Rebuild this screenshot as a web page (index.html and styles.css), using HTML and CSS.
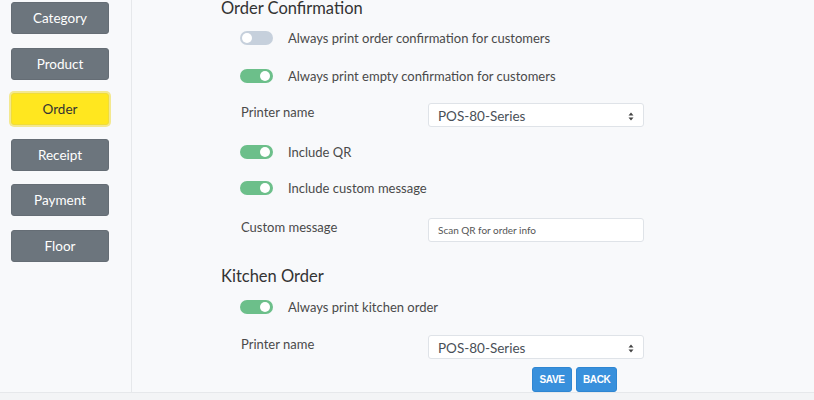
FILE: index.html
```html
<!DOCTYPE html>
<html>
<head>
<meta charset="utf-8">
<link rel="stylesheet" href="styles.css">
</head>
<body>
<div class="app">
  <aside class="sidebar">
    <button class="nav-btn">Category</button>
    <button class="nav-btn">Product</button>
    <button class="nav-btn active">Order</button>
    <button class="nav-btn">Receipt</button>
    <button class="nav-btn">Payment</button>
    <button class="nav-btn">Floor</button>
  </aside>
  <main class="main">
    <h2 class="section-title first">Order Confirmation</h2>
    <div class="toggle-row r1"><span class="toggle off"><span class="knob"></span></span><span class="toggle-label">Always print order confirmation for customers</span></div>
    <div class="toggle-row r2"><span class="toggle on"><span class="knob"></span></span><span class="toggle-label">Always print empty confirmation for customers</span></div>
    <div class="field-row r3"><span class="field-label">Printer name</span>
      <div class="select"><span>POS-80-Series</span><svg width="6" height="9" viewBox="0 0 6 9"><path d="M3 0.5 L5.5 3.5 H0.5 Z M3 8.5 L5.5 5.5 H0.5 Z" fill="#444"/></svg></div>
    </div>
    <div class="toggle-row r4"><span class="toggle on"><span class="knob"></span></span><span class="toggle-label">Include QR</span></div>
    <div class="toggle-row r5"><span class="toggle on"><span class="knob"></span></span><span class="toggle-label">Include custom message</span></div>
    <div class="field-row r6"><span class="field-label">Custom message</span>
      <div class="input">Scan QR for order info</div>
    </div>
    <h2 class="section-title second">Kitchen Order</h2>
    <div class="toggle-row r7"><span class="toggle on"><span class="knob"></span></span><span class="toggle-label">Always print kitchen order</span></div>
    <div class="field-row r8"><span class="field-label">Printer name</span>
      <div class="select"><span>POS-80-Series</span><svg width="6" height="9" viewBox="0 0 6 9"><path d="M3 0.5 L5.5 3.5 H0.5 Z M3 8.5 L5.5 5.5 H0.5 Z" fill="#444"/></svg></div>
    </div>
    <div class="actions">
      <button class="btn-primary">SAVE</button>
      <button class="btn-primary">BACK</button>
    </div>
  </main>
</div>
</body>
</html>
```
FILE: styles.css
```css
html, body {
  margin: 0;
  padding: 0;
  background: #f3f4f6;
  font-family: Lato, "Open Sans", sans-serif;
  overflow: hidden;
}
.app {
  display: flex;
  height: 392px;
  background: #f8f9fb;
  border-bottom: 1px solid #e6e8eb;
}
.sidebar {
  width: 132px;
  flex: none;
  border-right: 1px solid #e6e8eb;
  display: flex;
  flex-direction: column;
  padding: 2px 0 0 11px;
  box-sizing: border-box;
}
.nav-btn {
  width: 98px;
  height: 32px;
  margin-bottom: 13.5px;
  background: #6c757d;
  border: 1px solid #656d75;
  border-radius: 3px;
  color: #fff;
  font-family: Lato, sans-serif;
  font-size: 13.5px;
  padding: 0;
}
.nav-btn.active {
  background: #ffe71f;
  border-color: #f0dc3a;
  color: #333;
  box-shadow: 0 0 0 2px #f3e88f;
}
.main {
  flex: 1;
  padding-left: 89px;
  display: flex;
  flex-direction: column;
  color: #4a4a4a;
}
.section-title {
  margin: 0;
  font-size: 16.5px;
  font-weight: 400;
  line-height: 18px;
  height: 18px;
  color: #333;
}
.section-title.first { margin-top: 0; line-height: 17px; height: 16px; }
.section-title.second { margin-top: 25px; }
.toggle-row {
  display: flex;
  align-items: center;
  height: 20px;
  padding-left: 19px;
  font-size: 13px;
}
.r1 { margin-top: 12px; }
.r2 { margin-top: 19px; }
.r4 { margin-top: 15px; }
.r5 { margin-top: 17px; }
.r7 { margin-top: 12px; }
.toggle {
  position: relative;
  width: 33px;
  height: 14px;
  border-radius: 7px;
  margin-right: 15px;
  flex: none;
}
.toggle.off { background: #c6d0dc; }
.toggle.on { background: #6cbf8a; }
.knob {
  position: absolute;
  top: 2px;
  width: 10px;
  height: 10px;
  border-radius: 50%;
  background: #fff;
}
.toggle.off .knob { left: 2px; }
.toggle.on .knob { right: 3px; }
.field-row {
  display: flex;
  align-items: flex-start;
  padding-left: 20px;
  font-size: 13px;
}
.r3 { margin-top: 18px; }
.r6 { margin-top: 21px; }
.r8 { margin-top: 19px; }
.field-label {
  width: 187px;
  line-height: 18px;
  flex: none;
}
.select, .input {
  width: 216px;
  height: 24px;
  box-sizing: border-box;
  background: #fff;
  border: 1px solid #dfe3e8;
  border-radius: 3px;
  padding: 0 9px;
  display: flex;
  align-items: center;
}
.select {
  justify-content: space-between;
  color: #495057;
  font-size: 13.5px;
  padding-top: 2px;
}
.input {
  font-size: 10px;
  color: #555;
}
.actions {
  display: flex;
  gap: 4px;
  margin-top: 8px;
  padding-left: 311px;
}
.btn-primary {
  height: 25px;
  padding: 0 6px;
  background: #3890dc;
  border: 1px solid #2f86d2;
  border-radius: 3px;
  color: #fff;
  font-family: "Liberation Sans", sans-serif;
  font-size: 10px;
  letter-spacing: -0.4px;
  font-weight: 700;
}
.btn-primary:first-child { width: 40px; }
.btn-primary:last-child { width: 41px; }
```
